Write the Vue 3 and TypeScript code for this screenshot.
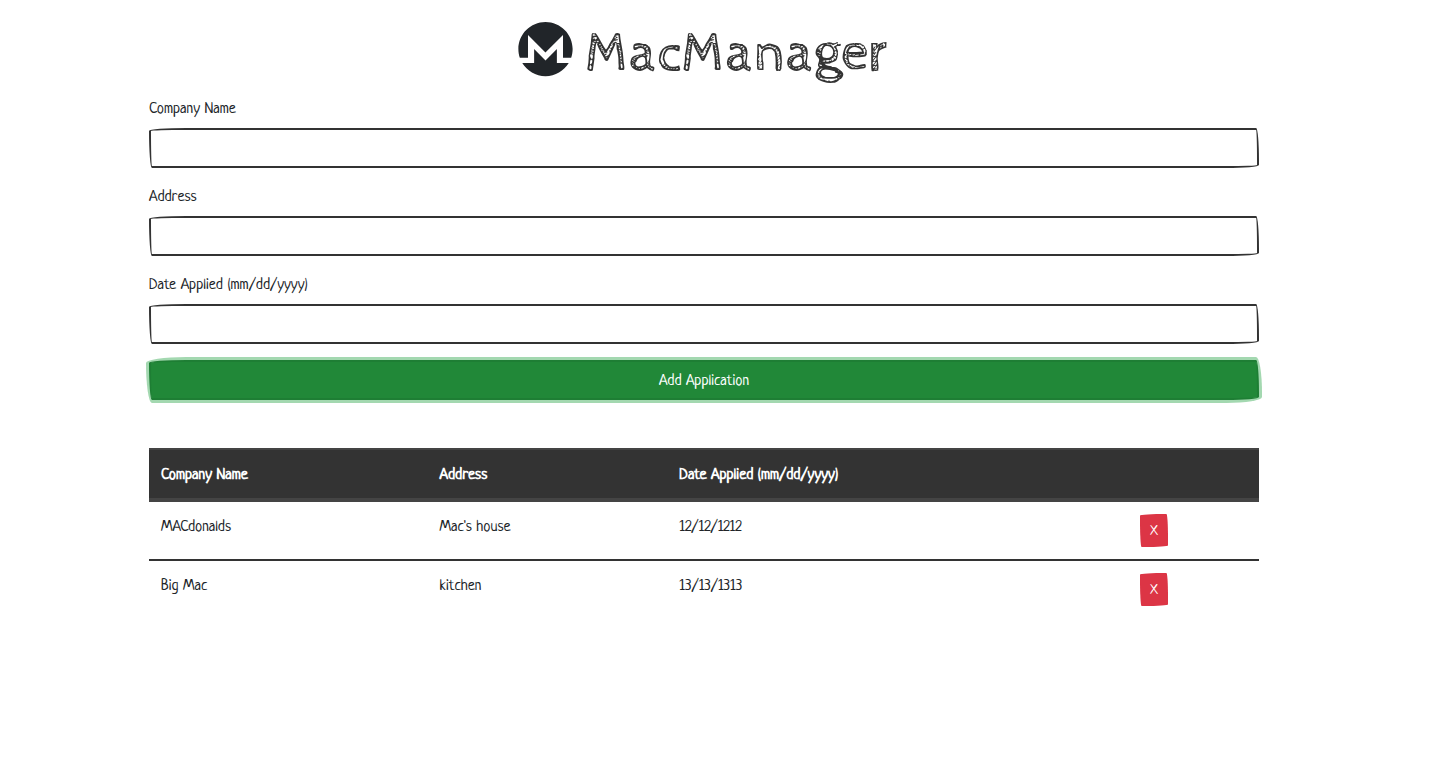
<script setup lang="ts">
import { ref } from 'vue'

interface Application {
  company: string
  address: string
  date: string
}

const company = ref('')
const address = ref('')
const date = ref('')

const applications = ref<Application[]>([
  { company: 'MACdonalds', address: "Mac's house", date: '12/12/1212' },
  { company: 'Big Mac', address: 'kitchen', date: '13/13/1313' },
])

function addApplication() {
  if (!company.value) return
  applications.value.push({ company: company.value, address: address.value, date: date.value })
  company.value = ''
  address.value = ''
  date.value = ''
}

function removeApplication(index: number) {
  applications.value.splice(index, 1)
}
</script>

<template>
  <main class="page">
    <div class="container">
      <h1 class="brand">
        <svg class="brand-icon" viewBox="0 0 496 512" aria-hidden="true">
          <path
            fill="currentColor"
            d="M352 384h108.4C417 455.9 338.1 504 248 504S79 455.9 35.6 384H144V256.2L248 361l104-105v128zM88 336V128l159.4 159.4L408 128v208h74.8c8.5-25.1 13.2-52 13.2-80C496 119 385 8 248 8S0 119 0 256c0 28 4.6 54.9 13.2 80H88z"
          />
        </svg>
        <span class="brand-name">MacManager</span>
      </h1>

      <form @submit.prevent="addApplication">
        <div class="field">
          <label for="company">Company Name</label>
          <input id="company" v-model="company" type="text" />
        </div>
        <div class="field">
          <label for="address">Address</label>
          <input id="address" v-model="address" type="text" />
        </div>
        <div class="field">
          <label for="date">Date Applied (mm/dd/yyyy)</label>
          <input id="date" v-model="date" type="text" />
        </div>
        <button class="add" type="submit">Add Application</button>
      </form>

      <table class="list">
        <colgroup>
          <col class="col-company" />
          <col class="col-address" />
          <col class="col-date" />
          <col />
        </colgroup>
        <thead>
          <tr>
            <th scope="col">Company Name</th>
            <th scope="col">Address</th>
            <th scope="col">Date Applied (mm/dd/yyyy)</th>
            <th></th>
          </tr>
        </thead>
        <tbody>
          <tr v-for="(item, index) in applications" :key="index">
            <td>{{ item.company }}</td>
            <td>{{ item.address }}</td>
            <td>{{ item.date }}</td>
            <td class="action">
              <button class="remove" type="button" @click="removeApplication(index)">X</button>
            </td>
          </tr>
        </tbody>
      </table>
    </div>
  </main>
</template>

<style>
body {
  background: #fff;
}
</style>

<style scoped>
* {
  box-sizing: border-box;
}

.page {
  padding: 16px 38px 16px 0;
  color: #212529;
  font-family: Neucha, 'Liberation Sans Narrow', Lato, sans-serif;
  font-size: 16px;
  line-height: 24px;
}

.container {
  max-width: 1140px;
  margin: 0 auto;
  padding: 0 15px;
}

.brand {
  display: flex;
  justify-content: center;
  align-items: flex-start;
  gap: 12px;
  margin: 0;
  height: 82px;
  font-family: 'Cabin Sketch', Lato, sans-serif;
  font-size: 56px;
  font-weight: 400;
  line-height: 76px;
}

.brand-icon {
  width: 55px;
  height: 56px;
  margin-top: 5px;
}

.brand-name {
  color: #333;
}

.field {
  margin-bottom: 18px;
}

.field label {
  display: block;
  margin-bottom: 6px;
}

.field input {
  display: block;
  width: 100%;
  height: 40px;
  padding: 8px 12px 4px;
  border: 2px solid #333;
  border-radius: 255px 20px 225px 20px / 20px 225px 20px 255px;
  background: #fff;
  color: #333;
  font: inherit;
}

.add {
  display: block;
  width: 100%;
  height: 40px;
  margin-top: -2px;
  margin-bottom: 48px;
  padding: 8px 12px 4px;
  border: 2px solid #1e7e34;
  border-radius: 255px 20px 225px 20px / 20px 225px 20px 255px;
  background: #218838;
  box-shadow: 0 0 0 3px #a3d8b0;
  color: #fff;
  font: inherit;
  line-height: 24px;
}

.list {
  width: 100%;
  table-layout: fixed;
  border-spacing: 0;
}

.col-company {
  width: 25.1%;
}

.col-address {
  width: 21.6%;
}

.col-date {
  width: 41.5%;
}

.list th,
.list td {
  padding: 14px 12px 10px;
  text-align: left;
  vertical-align: top;
}

.list .action {
  padding: 12px;
}

.list th {
  height: 54px;
  border-top: 2px solid #444;
  border-bottom: 4px solid #444;
  background: #333;
  color: #fff;
  font-weight: 700;
}

.list tbody tr + tr td {
  border-top: 2px solid #333;
}

.remove {
  display: block;
  width: 28px;
  height: 33px;
  padding: 2px 0 0;
  border: 2px solid #dc3545;
  border-radius: 255px 15px 225px 15px / 15px 225px 15px 255px;
  background: #dc3545;
  color: #fff;
  font: inherit;
  font-size: 14px;
  line-height: 21px;
}
</style>
